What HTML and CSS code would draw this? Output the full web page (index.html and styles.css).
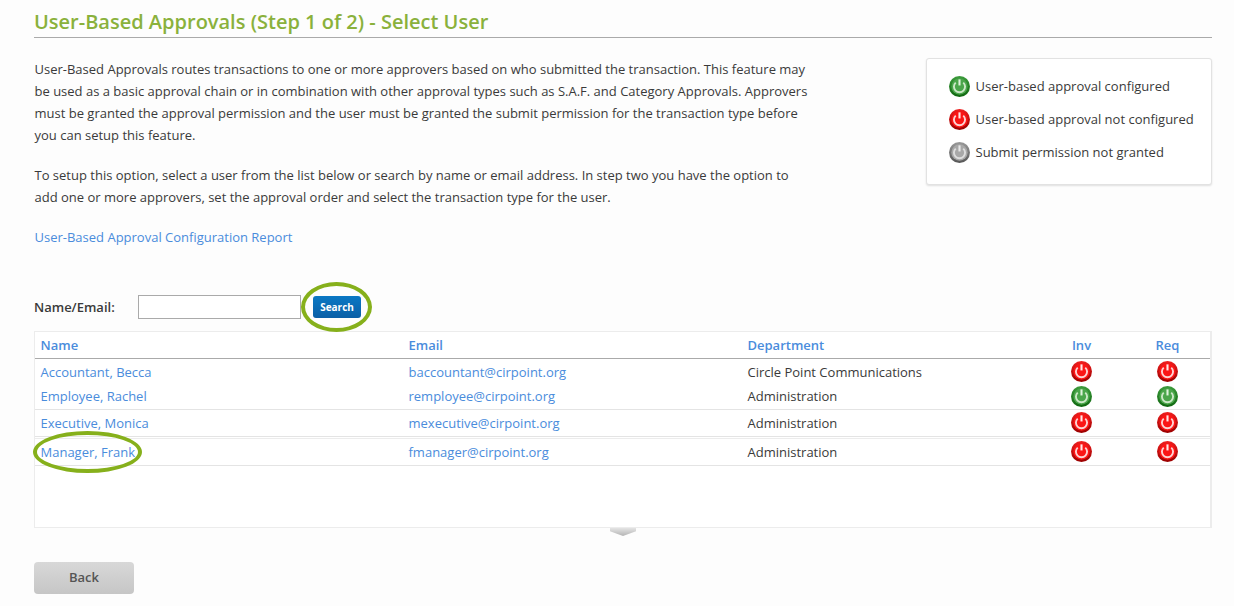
FILE: index.html
```html
<!DOCTYPE html>
<html lang="en">
<head>
<meta charset="utf-8">
<title>User-Based Approvals</title>
<link rel="stylesheet" href="styles.css">
</head>
<body>
<svg class="defs" width="0" height="0" aria-hidden="true">
  <defs>
    <linearGradient id="rg" x1="0" y1="0" x2="0" y2="1"><stop offset="0" stop-color="#3d9c3d"/><stop offset="1" stop-color="#0f660f"/></linearGradient>
    <linearGradient id="rr" x1="0" y1="0" x2="0" y2="1"><stop offset="0" stop-color="#ee2020"/><stop offset="1" stop-color="#9a0000"/></linearGradient>
    <linearGradient id="ry" x1="0" y1="0" x2="0" y2="1"><stop offset="0" stop-color="#9a9a9a"/><stop offset="1" stop-color="#565656"/></linearGradient>
    <symbol id="power-green" viewBox="0 0 20 20">
      <circle cx="10" cy="10" r="10" fill="url(#rg)"/><circle cx="10" cy="10" r="7.8" fill="#4ba64b"/>
      <path d="M6.4 6.3a5.3 5.3 0 1 0 7.2 0" fill="none" stroke="#cde8c8" stroke-width="1.8"/><path d="M10 3.2v5.8" stroke="#dff2db" stroke-width="2"/>
    </symbol>
    <symbol id="power-red" viewBox="0 0 20 20">
      <circle cx="10" cy="10" r="10" fill="url(#rr)"/><circle cx="10" cy="10" r="7.8" fill="#fb1616"/>
      <path d="M6.4 6.3a5.3 5.3 0 1 0 7.2 0" fill="none" stroke="#fcd4d4" stroke-width="1.8"/><path d="M10 3.2v5.8" stroke="#ffe8e8" stroke-width="2"/>
    </symbol>
    <symbol id="power-grey" viewBox="0 0 20 20">
      <circle cx="10" cy="10" r="10" fill="url(#ry)"/><circle cx="10" cy="10" r="7.8" fill="#a8a8a8"/>
      <path d="M6.4 6.3a5.3 5.3 0 1 0 7.2 0" fill="none" stroke="#dedede" stroke-width="1.8"/><path d="M10 3.2v5.8" stroke="#e8e8e8" stroke-width="2"/>
    </symbol>
  </defs>
</svg>
<main class="page">
  <h1 class="title">User-Based Approvals (Step 1 of 2) - Select User</h1>
  <div class="intro">
    <div class="copy">
      <p>User-Based Approvals routes transactions to one or more approvers based on who submitted the transaction. This feature may<br>be used as a basic approval chain or in combination with other approval types such as S.A.F. and Category Approvals. Approvers<br>must be granted the approval permission and the user must be granted the submit permission for the transaction type before<br>you can setup this feature.</p>
      <p>To setup this option, select a user from the list below or search by name or email address. In step two you have the option to<br>add one or more approvers, set the approval order and select the transaction type for the user.</p>
      <p><a href="#">User-Based Approval Configuration Report</a></p>
    </div>
    <aside class="legend">
      <div class="legend-item"><svg class="icon"><use href="#power-green"/></svg>User-based approval configured</div>
      <div class="legend-item"><svg class="icon"><use href="#power-red"/></svg>User-based approval not configured</div>
      <div class="legend-item"><svg class="icon"><use href="#power-grey"/></svg>Submit permission not granted</div>
    </aside>
  </div>
  <form class="search">
    <label class="search-label" for="q">Name/Email:</label>
    <input class="search-input" id="q" type="text">
    <span class="highlight-wrap">
      <button class="search-btn" type="button">Search</button>
      <span class="ring ring-search"></span>
    </span>
  </form>
  <section class="table">
    <div class="row head">
      <div>Name</div><div>Email</div><div>Department</div><div class="center">Inv</div><div class="center">Req</div>
    </div>
    <div class="row r1">
      <div><a href="#">Accountant, Becca</a></div><div><a href="#">baccountant@cirpoint.org</a></div><div>Circle Point Communications</div>
      <div class="center"><svg class="icon"><use href="#power-red"/></svg></div><div class="center"><svg class="icon"><use href="#power-red"/></svg></div>
    </div>
    <div class="row r2 line">
      <div><a href="#">Employee, Rachel</a></div><div><a href="#">remployee@cirpoint.org</a></div><div>Administration</div>
      <div class="center"><svg class="icon"><use href="#power-green"/></svg></div><div class="center"><svg class="icon"><use href="#power-green"/></svg></div>
    </div>
    <div class="row r3 line">
      <div><a href="#">Executive, Monica</a></div><div><a href="#">mexecutive@cirpoint.org</a></div><div>Administration</div>
      <div class="center"><svg class="icon"><use href="#power-red"/></svg></div><div class="center"><svg class="icon"><use href="#power-red"/></svg></div>
    </div>
    <div class="row r4 line">
      <div class="name-cell"><a href="#">Manager, Frank</a><span class="ring ring-name"></span></div><div><a href="#">fmanager@cirpoint.org</a></div><div>Administration</div>
      <div class="center"><svg class="icon"><use href="#power-red"/></svg></div><div class="center"><svg class="icon"><use href="#power-red"/></svg></div>
    </div>
  </section>
  <div class="handle"></div>
  <button class="back" type="button">Back</button>
</main>
</body>
</html>
```
FILE: styles.css
```css
* { box-sizing: border-box; }
html, body { margin: 0; height: 100%; }
body {
  background: #fdfdfd;
  color: #3a3a3a;
  font-family: "Open Sans", "Liberation Sans", sans-serif;
  font-size: 13px;
  overflow: hidden;
}
a { color: #4a8cdc; text-decoration: none; }
.defs { position: absolute; }
.page { padding: 0 22px 0 34px; }
.title {
  margin: 0;
  height: 38px;
  padding-top: 9px;
  border-bottom: 1px solid #aaa;
  color: #8ab13c;
  font-size: 20px;
  font-weight: 600;
  line-height: 26px;
}
.intro { display: flex; justify-content: space-between; align-items: flex-start; height: 251px; padding-top: 20px; }
.copy { width: 800px; padding-left: 0.5px; }
.copy p { margin: 0 0 18px; line-height: 22px; white-space: nowrap; }
.legend {
  width: 286px;
  height: 127px;
  background: #fff;
  border: 1px solid #e2e2e2;
  border-radius: 3px;
  box-shadow: 0 1px 2px rgba(0,0,0,.12);
  padding: 17px 0 0 22px;
}
.legend-item { display: flex; align-items: flex-start; gap: 5.5px; height: 21px; margin-bottom: 12px; line-height: 20px; white-space: nowrap; }
.icon { width: 21px; height: 21px; display: block; flex: none; }
.search { display: flex; align-items: center; height: 36px; }
.search-label { width: 104px; font-weight: 600; }
.search-input { width: 163px; height: 24px; border: 1px solid #aaa; background: #fff; }
.highlight-wrap { position: relative; margin-left: 12px; display: block; }
.search-btn {
  display: block;
  width: 48px;
  height: 22px;
  border: 0;
  border-radius: 3px;
  background: linear-gradient(#0a78c4, #0a5fa6);
  color: #fff;
  font: 700 10px "Open Sans", sans-serif;
  padding: 0;
}
.ring { position: absolute; border: 4px solid #86b01b; border-radius: 50%; pointer-events: none; }
.ring-search { left: -12px; top: -14px; width: 71px; height: 50px; }
.ring-name { left: -2px; top: -12px; width: 109px; height: 42px; }
.table {
  height: 197px;
  margin-top: 6px;
  background: #fff;
  border: 1px solid #ececec;
  border-right-width: 2px;
}
.row {
  display: grid;
  grid-template-columns: 368px 339px 298px 83px 87px;
  align-items: center;
}
.row > div { padding-left: 5.5px; white-space: nowrap; }
.row > .center { padding: 0; display: flex; justify-content: center; }
.row > .center:last-child { padding-left: 2px; }
.head { height: 27px; border-bottom: 1px solid #aaa; color: #4a8cdc; font-weight: 600; }
.r1 { height: 25px; }
.r2 { height: 26px; padding-bottom: 1px; }
.r3 { height: 27px; }
.r4 { height: 28px; margin-top: 1px; border-top: 1px solid #ececec; }
.r3 > .center, .r4 > .center { padding-bottom: 1px; }
.line { border-bottom: 1px solid #e4e4e4; }
.name-cell { position: relative; }
.handle {
  width: 26px;
  height: 8px;
  margin-left: 576px;
  background: linear-gradient(#e4e4e4, #b4b4b4);
  clip-path: polygon(0 0, 100% 0, 100% 40%, 50% 100%, 0 40%);
}
.back {
  display: block;
  width: 100px;
  height: 32px;
  margin-top: 26px;
  padding: 0 0 2px;
  border: 0;
  border-radius: 4px;
  background: linear-gradient(#d8d8d8, #c6c6c6);
  color: #555;
  font: 600 13px "Open Sans", sans-serif;
}
```
